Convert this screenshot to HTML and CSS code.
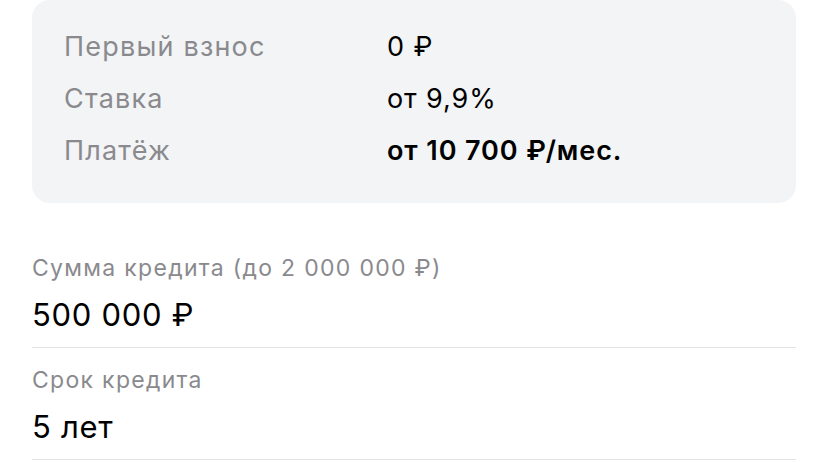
FILE: index.html
```html
<!DOCTYPE html>
<html lang="ru">
<head>
<meta charset="utf-8">
<link rel="stylesheet" href="styles.css">
</head>
<body>
<div class="page">
  <div class="summary">
    <div class="row"><span class="label">Первый взнос</span><span class="value">0 ₽</span></div>
    <div class="row"><span class="label">Ставка</span><span class="value">от 9,9%</span></div>
    <div class="row"><span class="label">Платёж</span><span class="value strong">от 10 700 ₽/мес.</span></div>
  </div>
  <div class="fields">
    <div class="field">
      <div class="field-label">Сумма кредита (до 2 000 000 ₽)</div>
      <div class="field-value">500 000 ₽</div>
    </div>
    <div class="field">
      <div class="field-label">Срок кредита</div>
      <div class="field-value">5 лет</div>
    </div>
  </div>
</div>
</body>
</html>
```
FILE: styles.css
```css
html, body {
  margin: 0;
  padding: 0;
  background: #ffffff;
}
body {
  font-family: Inter, "Noto Sans", sans-serif;
  color: #000000;
  -webkit-font-smoothing: antialiased;
}
.page {
  width: 828px;
  height: 462px;
  overflow: hidden;
  padding: 0 32px;
  box-sizing: border-box;
}
.summary {
  background: #f3f4f6;
  border-radius: 18px;
  padding: 21px 32px 26px;
  height: 203px;
  box-sizing: border-box;
}
.row {
  display: flex;
  font-size: 27px;
  line-height: 52px;
  height: 52px;
  letter-spacing: 0.9px;
}
.label {
  width: 323px;
  flex: none;
  color: #8a8a8e;
  letter-spacing: 1.2px;
}
.value {
  color: #000000;
}
.strong {
  font-weight: 600;
}
.fields {
  padding-top: 51px;
}
.field {
  border-bottom: 1px solid #e3e3e6;
  padding-bottom: 12px;
}
.field + .field {
  margin-top: 18px;
}
.field-label {
  font-size: 23px;
  line-height: 28px;
  letter-spacing: 1.3px;
  color: #8a8a8e;
}
.field-value {
  font-size: 31px;
  line-height: 40px;
  letter-spacing: 0.7px;
  margin-top: 13px;
}
```
